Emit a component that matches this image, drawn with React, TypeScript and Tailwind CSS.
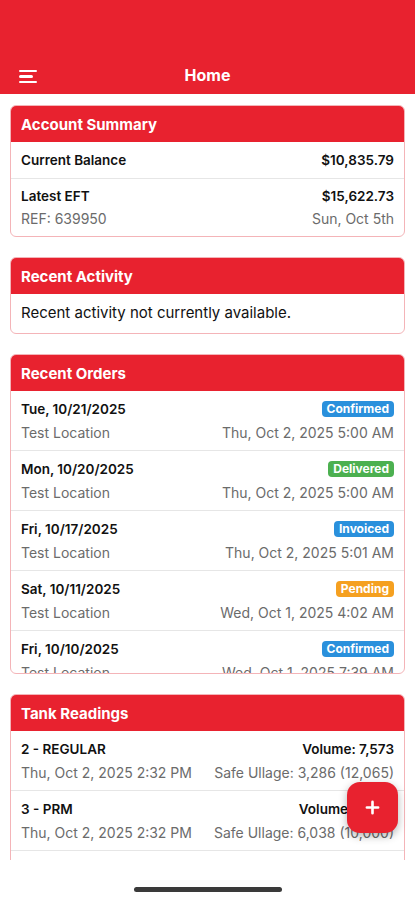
import React from "react";

const RED = "bg-[#e8222f]";

function CardHeader({ title }: { title: string }) {
  return (
    <div className={`${RED} h-[36px] flex items-center px-[10px] text-white font-bold text-[15px] leading-none`}>
      {title}
    </div>
  );
}

type Order = { date: string; status: string; when: string };
const orders: Order[] = [
  { date: "Tue, 10/21/2025", status: "Confirmed", when: "Thu, Oct 2, 2025 5:00 AM" },
  { date: "Mon, 10/20/2025", status: "Delivered", when: "Thu, Oct 2, 2025 5:00 AM" },
  { date: "Fri, 10/17/2025", status: "Invoiced", when: "Thu, Oct 2, 2025 5:01 AM" },
  { date: "Sat, 10/11/2025", status: "Pending", when: "Wed, Oct 1, 2025 4:02 AM" },
  { date: "Fri, 10/10/2025", status: "Confirmed", when: "Wed, Oct 1, 2025 7:39 AM" },
];

function Badge({ status }: { status: string }) {
  const cls =
    status === "Delivered"
      ? "bg-[#4cb050]"
      : status === "Pending"
      ? "bg-[#f5a020]"
      : "bg-[#2a90dc]";
  return (
    <span className={`${cls} text-white font-bold text-[12px] leading-none px-[5px] py-[2px] rounded-[4px]`}>
      {status}
    </span>
  );
}

export default function App() {
  return (
    <div
      className="w-[415px] h-[900px] bg-white relative overflow-hidden"
      style={{ fontFamily: "Inter, 'Liberation Sans', sans-serif" }}
    >
      {/* Top bar */}
      <div className={`${RED} h-[94px] relative flex items-end justify-center pb-[11px]`}>
        <div className="absolute left-[19px] bottom-[11px] flex flex-col gap-[3px]">
          <div className="w-[18px] h-[2.5px] bg-white rounded-full" />
          <div className="w-[14px] h-[2.5px] bg-white rounded-full" />
          <div className="w-[18px] h-[2.5px] bg-white rounded-full" />
        </div>
        <div className="text-white font-bold text-[16px] leading-none">Home</div>
      </div>

      {/* Content */}
      <div className="h-[766px] overflow-hidden px-[10px] pt-[11px] flex flex-col gap-[20px] text-[#111]">
        {/* Account Summary */}
        <div className="border border-[#f4b4b8] rounded-[6px] overflow-hidden shrink-0">
          <CardHeader title="Account Summary" />
          <div className="h-[37px] px-[10px] flex items-center justify-between border-b border-[#e6e6e6] text-[13.5px] font-semibold">
            <span>Current Balance</span>
            <span>$10,835.79</span>
          </div>
          <div className="px-[10px] pt-[8px] pb-[8px] flex flex-col gap-[5px]">
            <div className="flex justify-between font-semibold leading-[18px] text-[13.5px]">
              <span>Latest EFT</span>
              <span>$15,622.73</span>
            </div>
            <div className="flex justify-between text-[#6b6b6b] leading-[18px] text-[14px]">
              <span>REF: 639950</span>
              <span>Sun, Oct 5th</span>
            </div>
          </div>
        </div>

        {/* Recent Activity */}
        <div className="border border-[#f4b4b8] rounded-[6px] overflow-hidden shrink-0">
          <CardHeader title="Recent Activity" />
          <div className="h-[39px] px-[10px] flex items-center text-[15px]">
            Recent activity not currently available.
          </div>
        </div>

        {/* Recent Orders */}
        <div className="border border-[#f4b4b8] rounded-[6px] overflow-hidden shrink-0 h-[320px] flex flex-col">
          <CardHeader title="Recent Orders" />
          <div className="flex-1 overflow-hidden">
            {orders.map((o, i) => (
              <div
                key={i}
                className="h-[60px] px-[10px] pt-[8px] border-b border-[#e6e6e6] flex flex-col gap-[4px]"
              >
                <div className="flex justify-between items-center leading-[20px] text-[13.5px]">
                  <span className="font-semibold">{o.date}</span>
                  <Badge status={o.status} />
                </div>
                <div className="flex justify-between text-[#6b6b6b] leading-[20px] text-[14px]">
                  <span>Test Location</span>
                  <span>{o.when}</span>
                </div>
              </div>
            ))}
          </div>
        </div>

        {/* Tank Readings */}
        <div className="border border-[#f4b4b8] rounded-[6px] overflow-hidden shrink-0">
          <CardHeader title="Tank Readings" />
          {[
            { name: "2 - REGULAR", vol: "Volume: 7,573", when: "Thu, Oct 2, 2025 2:32 PM", ull: "Safe Ullage: 3,286 (12,065)" },
            { name: "3 - PRM", vol: "Volume: 2,962", when: "Thu, Oct 2, 2025 2:32 PM", ull: "Safe Ullage: 6,038 (10,000)" },
          ].map((t, i) => (
            <div
              key={i}
              className="h-[60px] px-[10px] pt-[8px] border-b border-[#e6e6e6] flex flex-col gap-[4px]"
            >
              <div className="flex justify-between leading-[20px] font-semibold text-[13.5px]">
                <span>{t.name}</span>
                <span>{t.vol}</span>
              </div>
              <div className="flex justify-between text-[#6b6b6b] leading-[20px] text-[14px]">
                <span>{t.when}</span>
                <span>{t.ull}</span>
              </div>
            </div>
          ))}
          <div className="h-[60px]" />
        </div>
      </div>

      {/* FAB */}
      <button className="absolute left-[347px] top-[782px] w-[51px] h-[51px] rounded-[13px] bg-[#e8222f] shadow-[0_3px_8px_rgba(0,0,0,0.3)] flex items-center justify-center">
        <svg width="15" height="15" viewBox="0 0 16 16">
          <path d="M8 2v12M2 8h12" stroke="white" strokeWidth="2.8" strokeLinecap="round" />
        </svg>
      </button>

      {/* Home indicator */}
      <div className="absolute left-[134px] top-[887px] w-[148px] h-[5px] rounded-full bg-[#3a3a3a]" />
    </div>
  );
}
